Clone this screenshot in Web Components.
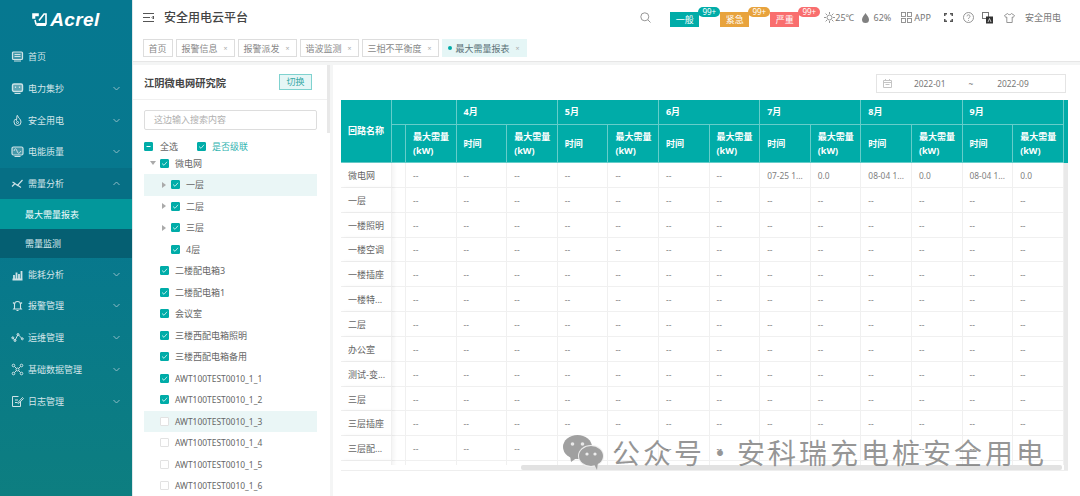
<!DOCTYPE html>
<html lang="zh">
<head>
<meta charset="utf-8">
<title>安全用电云平台</title>
<style>
  html, body { margin: 0; height: 100%; overflow: hidden; background: #f4f5f5; }
  body { font-family: "Noto Sans", "Noto Sans CJK SC", sans-serif; font-size: 9px; color: #666; }
</style>
</head>
<body>
<app-shell>
  <app-sidebar slot="side">
    <nav-item icon="home" label="首页" flat></nav-item>
    <nav-item icon="meter" label="电力集抄"></nav-item>
    <nav-item icon="fire" label="安全用电"></nav-item>
    <nav-item icon="wave" label="电能质量"></nav-item>
    <nav-item icon="trend" label="需量分析" open></nav-item>
    <nav-sub label="最大需量报表" active></nav-sub>
    <nav-sub label="需量监测"></nav-sub>
    <nav-item icon="bars" label="能耗分析"></nav-item>
    <nav-item icon="bell" label="报警管理"></nav-item>
    <nav-item icon="line" label="运维管理"></nav-item>
    <nav-item icon="nodes" label="基础数据管理"></nav-item>
    <nav-item icon="note" label="日志管理"></nav-item>
  </app-sidebar>
  <app-header slot="top"></app-header>
  <tab-bar slot="top">
    <tab-chip label="首页" fixed></tab-chip>
    <tab-chip label="报警信息"></tab-chip>
    <tab-chip label="报警派发"></tab-chip>
    <tab-chip label="谐波监测"></tab-chip>
    <tab-chip label="三相不平衡度"></tab-chip>
    <tab-chip label="最大需量报表" active></tab-chip>
  </tab-bar>
  <tree-panel slot="tree">
    <tree-row label="微电网" level="0" arrow="down" checked></tree-row>
    <tree-row label="一层" level="1" arrow="right" checked hover></tree-row>
    <tree-row label="二层" level="1" arrow="right" checked></tree-row>
    <tree-row label="三层" level="1" arrow="right" checked></tree-row>
    <tree-row label="4层" level="1" checked></tree-row>
    <tree-row label="二楼配电箱3" level="0" checked></tree-row>
    <tree-row label="二楼配电箱1" level="0" checked></tree-row>
    <tree-row label="会议室" level="0" checked></tree-row>
    <tree-row label="三楼西配电箱照明" level="0" checked></tree-row>
    <tree-row label="三楼西配电箱备用" level="0" checked></tree-row>
    <tree-row label="AWT100TEST0010_1_1" level="0" checked></tree-row>
    <tree-row label="AWT100TEST0010_1_2" level="0" checked></tree-row>
    <tree-row label="AWT100TEST0010_1_3" level="0" hover></tree-row>
    <tree-row label="AWT100TEST0010_1_4" level="0"></tree-row>
    <tree-row label="AWT100TEST0010_1_5" level="0"></tree-row>
    <tree-row label="AWT100TEST0010_1_6" level="0"></tree-row>
  </tree-panel>
  <report-panel slot="main">
    <demand-table></demand-table>
  </report-panel>
  <water-mark slot="over"></water-mark>
</app-shell>

<script>
const ICONS = {
  home: '<rect x="1.5" y="2" width="10" height="7.5" rx="1" fill="rgba(207,227,231,.3)" stroke-width="1.2"/><path d="M3.5 4.500h6M3.500 6.500h6M3 11h7"/>',
  meter: '<rect x="1.5" y="2" width="10" height="7.5" rx="1.5" fill="rgba(207,227,231,.45)" stroke-width="1.4"/><path d="M4.500 4.500v1.500M8.500 4.500v1.500M3.500 11.500h6" stroke-width="1.200"/>',
  fire: '<path d="M6.500 1.500c.5 2.500 3.500 3.500 3.500 6.500a3.500 3.500 0 0 1-7 0c0-1.500.8-2.300 1.500-3 .2 1 .7 1.300 1 1.500.4-1.500.2-3.500.5-5z"/><circle cx="6.500" cy="8.500" r="1"/>',
  wave: '<rect x="1" y="2" width="11" height="8" rx="1.500" fill="rgba(207,227,231,.3)" stroke-width="1.200"/><path d="M3 6c1-3 2-3 3 0s2 3 4 0M3.500 11.500h6"/>',
  trend: '<path d="M1 9.500l3-3 2.500 2 5-5.500M1.500 5l2.500 1.500M7 8.500l3 2" stroke-width="1.200"/>',
  bars: '<path d="M1.500 11.500h10M3 11V7M5.500 11V4.500M8 11V6M10.500 11V3" stroke-width="1.800"/>',
  bell: '<path d="M3.500 9V5.500a3 3 0 0 1 6 0V9l.8 1h-7.600zM5.500 11.500h2M2 3.500l1 1M11 3.500l-1 1" stroke-width="1.100"/>',
  line: '<path d="M1.500 6.500L4 9.500l3-6 4.500 4.500"/><circle cx="1.800" cy="6.800" r="1"/><circle cx="4" cy="9.500" r="1"/><circle cx="7" cy="3.500" r="1"/><circle cx="11.300" cy="7.800" r="1"/>',
  nodes: '<circle cx="2.500" cy="2.500" r="1.300"/><circle cx="10.500" cy="2.500" r="1.300"/><circle cx="2.500" cy="10.500" r="1.300"/><circle cx="10.500" cy="10.500" r="1.300"/><circle cx="6.500" cy="6.500" r="1.500"/><path d="M3.500 3.500l2 2M9.500 3.500l-2 2M3.500 9.500l2-2M9.500 9.500l-2-2"/>',
  note: '<path d="M9.500 6.500v5h-8v-10h6M4 5h3M4 7.500h2"/><path d="M6.500 8l5-5.500 1 1-5 5.200z"/>'
};

class AppShell extends HTMLElement {
  connectedCallback() {
    this.attachShadow({ mode: 'open' });
    this.shadowRoot.innerHTML = `
      <style>
        :host { display: grid; grid-template-columns: 132px 1fr; width: 1080px; height: 496px; position: relative; overflow: hidden; }
        .right { display: flex; flex-direction: column; min-width: 0; border-left: 1px solid #dfe8ea; }
        .top { background: #fff; height: 61px; border-bottom: 1px solid #e6e6e6; flex: none; }
        .body { flex: 1; display: flex; gap: 3px; padding-top: 3px; min-height: 0; border-bottom: 2px solid #7e8c90; }
      </style>
      <slot name="side"></slot>
      <div class="right">
        <div class="top"><slot name="top"></slot></div>
        <div class="body"><slot name="tree"></slot><slot name="main"></slot></div>
      </div>
      <slot name="over"></slot>
    `;
  }
}

class AppSidebar extends HTMLElement {
  connectedCallback() {
    this.attachShadow({ mode: 'open' });
    this.shadowRoot.innerHTML = `
      <style>
        :host { display: block; height: 496px; background: linear-gradient(180deg, #067890 0%, #07788d 50%, #0d7e80 100%); color: #d4e6ea; }
        .logo { height: 41px; display: flex; align-items: center; justify-content: center; gap: 3px; padding: 0 0 2px 0; box-sizing: border-box; }
        .logo b { font: italic 700 19px/1 "Liberation Sans", sans-serif; color: #fff; letter-spacing: .4px; }
        svg { display: block; }
      </style>
      <div class="logo">
        <svg width="15" height="14" viewBox="0 0 15 14" fill="none" stroke="#fff">
          <path d="M1 1h5v1.500H2.500V5H1zM3 7l1 4h10V1h-2L7 7.500" stroke-width="1.600"/>
          <path d="M6 10h8v3H4z" fill="#fff" stroke="none"/>
        </svg>
        <b>Acrel</b>
      </div>
      <slot></slot>
    `;
  }
}

class NavItem extends HTMLElement {
  connectedCallback() {
    const open = this.hasAttribute('open');
    const flat = this.hasAttribute('flat');
    this.attachShadow({ mode: 'open' });
    this.shadowRoot.innerHTML = `
      <style>
        :host { display: flex; align-items: center; height: 31.700px; padding: 0 12px 0 11px; box-sizing: border-box; gap: 4px; font-size: 9px; color: #d4e6ea; }
        :host([open]) { background: #066f85; }
        svg.i { flex: none; }
        span { flex: 1; white-space: nowrap; }
      </style>
      <svg class="i" width="13" height="13" viewBox="0 0 13 13" fill="none" stroke="#cfe3e7" stroke-width="1">${ICONS[this.getAttribute('icon')]}</svg>
      <span>${this.getAttribute('label')}</span>
      ${flat ? '' : `<svg width="7" height="5" viewBox="0 0 7 5" fill="none" stroke="#8fbcc6"><path d="${open ? 'M.5 4L3.500 1l3 3' : 'M.5 1l3 3 3-3'}"/></svg>`}
    `;
  }
}

class NavSub extends HTMLElement {
  connectedCallback() {
    this.attachShadow({ mode: 'open' });
    this.shadowRoot.innerHTML = `
      <style>
        :host { display: flex; align-items: center; height: 29.500px; padding-left: 25px; background: #055f72; color: #d9ecef; font-size: 9px; }
        :host([active]) { background: #03979b; color: #f2fbfb; }
      </style>
      ${this.getAttribute('label')}
    `;
  }
}

class AppHeader extends HTMLElement {
  connectedCallback() {
    this.attachShadow({ mode: 'open' });
    const ic = 'fill="none" stroke="#8a8a8a" stroke-width=".9"';
    this.shadowRoot.innerHTML = `
      <style>
        :host { display: flex; align-items: center; height: 35px; padding: 0 19px 0 10px; color: #777; font-size: 9px; white-space: nowrap; }
        h1 { margin: 0 0 0 10px; font-size: 12px; font-weight: 500; color: #444; line-height: 1; }
        svg { display: block; flex: none; }
        .tools { margin-left: auto; display: flex; align-items: center; }
        .badge { position: relative; width: 29px; height: 15px; margin-top: 4px; color: #fff; font-size: 9px; line-height: 15px; text-align: center; }
        .badge i { position: absolute; left: 28px; top: -5px; width: 22px; height: 10px; border-radius: 5px; font: normal 8px/10px "Noto Sans", sans-serif; background: inherit; }
        .pair { display: flex; align-items: center; gap: 2px; }
      </style>
      <svg width="11" height="9" viewBox="0 0 11 9" fill="none" stroke="#555"><path d="M0 .5h11M0 4.500h7M0 8.500h11M10.500 3v3L9 4.500z"/></svg>
      <h1>安全用电云平台</h1>
      <div class="tools">
        <svg width="11" height="11" viewBox="0 0 11 11" ${ic} style="margin-right:19px"><circle cx="4.800" cy="4.800" r="4"/><path d="M7.800 7.800L10.500 10.500"/></svg>
        <div class="badge" style="background:#00aca8;margin-right:21px">一般<i>99+</i></div>
        <div class="badge" style="background:#e8a33d;margin-right:21px">紧急<i>99+</i></div>
        <div class="badge" style="background:#f96e6e;margin-right:25px">严重<i>99+</i></div>
        <div class="pair" style="margin-right:7px;gap:0">
          <svg width="11" height="11" viewBox="0 0 11 11" ${ic}><circle cx="5.500" cy="5.500" r="2.500"/><path d="M5.500 0v2M5.500 9v2M0 5.500h2M9 5.500h2M1.600 1.600L3 3M8 8l1.400 1.400M1.600 9.400L3 8M8 3l1.400-1.400"/></svg>
          <span>25℃</span>
        </div>
        <div class="pair" style="margin-right:10px;gap:5px">
          <svg width="7" height="10" viewBox="0 0 7 10" fill="#808080"><path d="M3.500 0C4.500 2 7 4 7 6.500a3.500 3.500 0 0 1-7 0C0 4 2.500 2 3.500 0z"/></svg>
          <span>62%</span>
        </div>
        <div class="pair" style="margin-right:13px">
          <svg width="11" height="11" viewBox="0 0 11 11" ${ic}><rect x=".5" y=".5" width="4" height="4"/><rect x="6.500" y=".5" width="4" height="4"/><rect x=".5" y="6.500" width="4" height="4"/><rect x="6.500" y="6.500" width="4" height="4"/></svg>
          <span>APP</span>
        </div>
        <svg width="9" height="9" viewBox="0 0 9 9" fill="#555" style="margin-right:10px"><path d="M0 0h3v1.500H1.500V3H0zM6 0h3v3H7.500V1.500H6zM0 6h1.500v1.500H3V9H0zM7.500 6H9v3H6V7.500h1.500z"/></svg>
        <svg width="11" height="11" viewBox="0 0 11 11" ${ic} style="margin-right:8px"><circle cx="5.500" cy="5.500" r="5"/><path d="M4 4.300a1.500 1.500 0 1 1 2.300 1.300c-.6.400-.8.700-.8 1.300M5.500 8v.8"/></svg>
        <svg width="11" height="12" viewBox="0 0 11 12" style="margin-right:11px"><rect x=".5" y=".5" width="6" height="6" fill="#fff" stroke="#777"/><rect x="4" y="4.500" width="7" height="7" fill="#333"/><path d="M6 10l1.500-3.500L9 10" fill="none" stroke="#fff" stroke-width=".7"/></svg>
        <svg width="11" height="10" viewBox="0 0 11 10" ${ic} style="margin-right:10px"><path d="M3.500.5L.5 2.500l1.300 2 1-.5v5.500h5.400V4l1 .5 1.300-2-3-2c-.4 1.500-3.600 1.500-4 0z"/></svg>
        <span>安全用电</span>
      </div>
    `;
  }
}

class TabBar extends HTMLElement {
  connectedCallback() {
    this.attachShadow({ mode: 'open' });
    this.shadowRoot.innerHTML = `
      <style>:host { display: flex; gap: 3px; padding: 4px 0 0 9.500px; }</style>
      <slot></slot>
    `;
  }
}

class TabChip extends HTMLElement {
  connectedCallback() {
    const active = this.hasAttribute('active');
    this.attachShadow({ mode: 'open' });
    this.shadowRoot.innerHTML = `
      <style>
        :host { display: flex; align-items: center; height: 16px; padding: 0 5px; border: 1px solid #ddd; gap: 5px; font-size: 9px; color: #888; white-space: nowrap; box-sizing: content-box; background: #fff; }
        :host([active]) { background: #e5f6f6; border-color: #e5f6f6; color: #5b7278; }
        .x { width: 6px; font-size: 7px; color: #aaa; text-align: center; }
        .dot { width: 4px; height: 4px; border-radius: 50%; background: #00aca8; margin-right: -1px; }
      </style>
      ${active ? '<i class="dot"></i>' : ''}<span>${this.getAttribute('label')}</span>
      ${this.hasAttribute('fixed') ? '' : '<span class="x">×</span>'}
    `;
  }
}

class CheckBox extends HTMLElement {
  connectedCallback() {
    const mode = this.getAttribute('mode');
    this.attachShadow({ mode: 'open' });
    this.shadowRoot.innerHTML = `
      <style>
        :host { display: block; width: 9px; height: 9px; box-sizing: border-box; flex: none; border: 1px solid #e2e2e2; background: #fff; border-radius: 1px; }
        :host([mode]) { background: #00aca8; border-color: #00aca8; }
        svg { display: block; }
      </style>
      ${mode === 'on' ? '<svg width="7" height="7" viewBox="0 0 7 7" fill="none" stroke="#c8f0ee" stroke-width=".9"><path d="M1 3.500l2 1.800 3-3.500"/></svg>' : ''}
      ${mode === 'mix' ? '<svg width="7" height="7" viewBox="0 0 7 7" fill="none" stroke="#fff"><path d="M1.500 3.500h4"/></svg>' : ''}
    `;
  }
}

class TreeRow extends HTMLElement {
  connectedCallback() {
    const level = +this.getAttribute('level');
    const arrow = this.getAttribute('arrow');
    const on = this.hasAttribute('checked');
    const label = this.getAttribute('label');
    const path = arrow === 'down' ? 'M0 1h6L3 5z' : 'M1 0l4 3-4 3z';
    this.attachShadow({ mode: 'open' });
    this.shadowRoot.innerHTML = `
      <style>
        :host { display: flex; align-items: center; height: 21.500px; box-sizing: border-box; padding-left: ${level ? 17 : 6}px; font-size: 9px; color: #666; white-space: nowrap; }
        :host([hover]) { background: #eaf6f6; }
        .arrow { width: 10px; height: 6px; flex: none; }
        svg { display: block; }
        check-box { margin-right: 6px; }
        .latin { font-size: 8.450px; }
      </style>
      <div class="arrow">${arrow ? `<svg width="6" height="6" viewBox="0 0 6 6" fill="#aaa"><path d="${path}"/></svg>` : ''}</div>
      <check-box ${on ? 'mode="on"' : ''}></check-box>
      <span class="${/^AWT/.test(label) ? 'latin' : ''}">${label}</span>
    `;
  }
}

class TreePanel extends HTMLElement {
  connectedCallback() {
    this.attachShadow({ mode: 'open' });
    this.shadowRoot.innerHTML = `
      <style>
        :host { display: block; width: 197px; flex: none; background: #fff; position: relative; overflow: hidden; box-sizing: border-box; height: 100%; }
        .title { height: 35px; display: flex; align-items: center; justify-content: space-between; padding: 0 18px 0 11px; border-bottom: 1px solid #f0f0f0; box-sizing: border-box; }
        .title b { font-size: 10.250px; color: #444; font-weight: 700; }
        .title button { width: 33px; height: 16px; padding: 0; border: 1px solid #7fd2cf; background: #e5f6f6; color: #39a9a6; font: inherit; font-size: 9px; line-height: 14px; }
        .body { padding: 10px 13px 0 11px; }
        .search { height: 20px; border: 1px solid #ddd; border-radius: 2px; box-sizing: border-box; padding-left: 9px; line-height: 18px; color: #b0b0b0; font-size: 9px; }
        .all { display: flex; align-items: center; height: 12.500px; margin-top: 10px; }
        .all span { margin-left: 7px; }
        .all .c { color: #2fb3af; margin-left: 6px; }
        .all span + check-box { margin-left: 19px; }
        .scroll { position: absolute; right: 0; top: 0; width: 3px; height: 68px; background: #e8e8e8; }
      </style>
      <div class="title"><b>江阴微电网研究院</b><button>切换</button></div>
      <div class="body">
        <div class="search">这边输入搜索内容</div>
        <div class="all">
          <check-box mode="mix"></check-box><span>全选</span>
          <check-box mode="on"></check-box><span class="c">是否级联</span>
        </div>
        <slot></slot>
      </div>
      <div class="scroll"></div>
    `;
  }
}

class ReportPanel extends HTMLElement {
  connectedCallback() {
    this.attachShadow({ mode: 'open' });
    this.shadowRoot.innerHTML = `
      <style>
        :host { display: block; flex: 1; min-width: 0; background: #fff; padding: 9px 14px 0 8px; box-sizing: border-box; }
        .bar { display: flex; justify-content: flex-end; height: 26px; }
        .range { width: 190px; height: 19px; border: 1px solid #e4e4e4; box-sizing: border-box; display: flex; align-items: center; color: #777; font-size: 8.400px; padding-left: 6px; }
        svg { display: block; flex: none; }
        .range span:nth-of-type(1) { margin-left: 22px; }
        .range span:nth-of-type(2) { margin-left: 23px; }
        .range span:nth-of-type(3) { margin-left: 24px; }
      </style>
      <div class="bar">
        <div class="range">
          <svg width="9" height="9" viewBox="0 0 9 9" fill="none" stroke="#c4c4c4"><path d="M.5 1.500h8v7h-8zM.5 3.500h8M2.500 0v2M6.500 0v2M2.500 5.500h4"/></svg>
          <span>2022-01</span><span>~</span><span>2022-09</span>
        </div>
      </div>
      <slot></slot>
    `;
  }
}

class DemandTable extends HTMLElement {
  connectedCallback() {
    const names = ['微电网', '一层', '一楼照明', '一楼空调', '一楼插座', '一楼特...', '二层', '办公室', '测试-变...', '三层', '三层插座', '三层配...', ''];
    const months = ['4月', '5月', '6月', '7月', '8月', '9月'];
    const first = { 8: '07-25 1...', 9: '0.0', 10: '08-04 1...', 11: '0.0', 12: '08-04 1...', 13: '0.0' };
    const demand = '<div class="h sub">最大需量<br>(kW)</div>';
    let head = '<div class="h name">回路名称</div><div class="h month blank"></div>';
    months.forEach(m => { head += `<div class="h month">${m}</div>`; });
    head += '<div class="h edge"></div>';
    let sub = '<div class="h"></div>' + demand;
    months.forEach(() => { sub += '<div class="h sub">时间</div>' + demand; });
    let rows = '';
    names.forEach((n, r) => {
      rows += `<div class="c first">${n}</div><div class="c"></div>`;
      for (let i = 1; i <= 13; i++) {
        const v = r === 0 && first[i] ? first[i] : '--';
        rows += `<div class="c">${n ? v : ''}</div>`;
      }
      rows += '<div></div>';
    });
    this.attachShadow({ mode: 'open' });
    this.shadowRoot.innerHTML = `
      <style>
        :host { display: block; position: relative; width: 727px; height: 370px; border-bottom: 1px solid #eee; font-size: 9px; }
        .view { height: 365px; overflow: hidden; }
        .grid { display: grid; grid-template-columns: 51px 14px repeat(13, 50.600px) 4px; grid-template-rows: 25px 38px repeat(13, 24.850px); }
        .h { background: #00aca8; color: #fff; font-weight: 700; border-right: 1px solid #66cdca; border-bottom: 1px solid #66cdca; box-sizing: border-box; display: flex; align-items: center; padding-left: 7px; line-height: 14px; min-width: 0; }
        .name { grid-row: 1 / 3; }
        .month { grid-column: span 2; }
        .blank { grid-column: 2 / 4; }
        .edge { grid-row: 1 / 3; grid-column: 16; padding: 0; border: 0; }
        .sub { white-space: nowrap; }
        .c { border-right: 1px solid #f0f0f0; border-bottom: 1px solid #f0f0f0; box-sizing: border-box; display: flex; align-items: center; padding: 1px 0 0 7px; color: #808080; font-size: 8.400px; white-space: nowrap; overflow: hidden; background: #fff; min-width: 0; }
        .first { color: #666; font-size: 9px; box-shadow: 2px 0 4px rgba(0,0,0,.05); position: relative; z-index: 1; }
        .vbar { position: absolute; right: 0; top: 63px; width: 4px; height: 307px; background: #e9e9e9; }
        .hbar { position: absolute; left: 180px; bottom: 0; width: 541px; height: 5px; border-radius: 2px; background: #e2e2e2; z-index: 2; }
      </style>
      <div class="view"><div class="grid">${head}${sub}${rows}</div></div>
      <div class="vbar"></div>
      <div class="hbar"></div>
    `;
  }
}

class WaterMark extends HTMLElement {
  connectedCallback() {
    this.attachShadow({ mode: 'open' });
    this.shadowRoot.innerHTML = `
      <style>
        :host { position: absolute; left: 563px; top: 434px; display: flex; align-items: center; gap: 7px; height: 36px; pointer-events: none; z-index: 5; white-space: nowrap; }
        span { font: 400 28px/36px "Noto Sans CJK SC", sans-serif; letter-spacing: 3px; color: rgba(110,110,110,.72); }
        span.dot { margin: 0 -4px 0 -6px; letter-spacing: 0; }
        svg { display: block; flex: none; }
      </style>
      <svg width="42" height="36" viewBox="0 0 42 36">
        <ellipse cx="14.500" cy="13" rx="14.500" ry="12" fill="#a0a0a0"/>
        <path d="M7 21l1 7 7-5z" fill="#a0a0a0"/>
        <circle cx="9.500" cy="10" r="1.800" fill="#e8e8e8"/><circle cx="19.500" cy="10" r="1.800" fill="#e8e8e8"/>
        <ellipse cx="28" cy="22" rx="13" ry="11" fill="#eee"/>
        <ellipse cx="28" cy="22" rx="12" ry="10" fill="#a0a0a0"/>
        <path d="M31 30l3 6 1-8z" fill="#a0a0a0"/>
        <circle cx="24" cy="20" r="1.600" fill="#eee"/><circle cx="32" cy="20" r="1.600" fill="#eee"/>
      </svg>
      <span>公众号</span><span class="dot">·</span><span>安科瑞充电桩安全用电</span>
    `;
  }
}

customElements.define('check-box', CheckBox);
customElements.define('app-shell', AppShell);
customElements.define('app-sidebar', AppSidebar);
customElements.define('nav-item', NavItem);
customElements.define('nav-sub', NavSub);
customElements.define('app-header', AppHeader);
customElements.define('tab-bar', TabBar);
customElements.define('tab-chip', TabChip);
customElements.define('tree-row', TreeRow);
customElements.define('tree-panel', TreePanel);
customElements.define('report-panel', ReportPanel);
customElements.define('demand-table', DemandTable);
customElements.define('water-mark', WaterMark);
</script>
</body>
</html>
